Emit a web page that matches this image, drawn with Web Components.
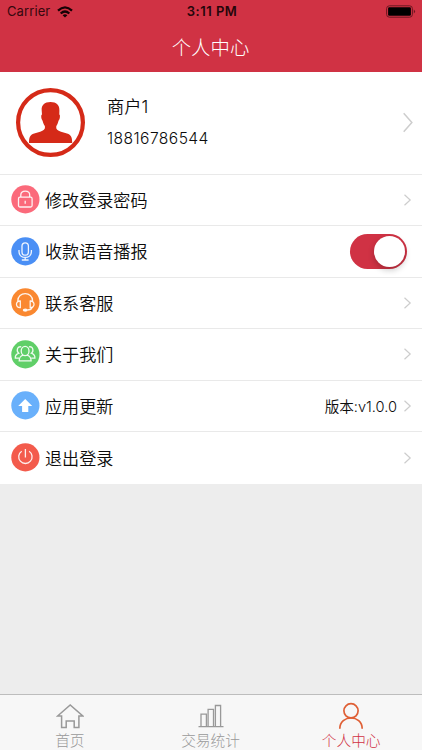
<!DOCTYPE html>
<html lang="zh-CN">
<head>
<meta charset="utf-8">
<title>个人中心</title>
<style>
    html, body {
        margin: 0;
        height: 100%;
        overflow: hidden;
    }
    body {
        font-family: Inter, "Noto Sans CJK SC", sans-serif;
        font-weight: 350;
        color: #0c0c0c;
    }
</style>
</head>
<body>
<profile-page></profile-page>

<script>
// Shared base: clones a template string into an open shadow root
class BaseElement extends HTMLElement {
    constructor() {
        super();
        this.attachShadow({ mode: 'open' });
        const template = document.createElement('template');
        template.innerHTML = this.render();
        this.shadowRoot.appendChild(template.content.cloneNode(true));
    }
}

class StatusBar extends BaseElement {
    render() {
        return `
            <style>
                :host {
                    display: grid;
                    grid-template-columns: 1fr auto 1fr;
                    align-items: center;
                    height: 23px;
                    padding: 0 6px 0 7px;
                    color: #35080e;
                    font-size: 13px;
                    line-height: 23px;
                    box-sizing: border-box;
                }
                .left { display: flex; align-items: center; gap: 7px; letter-spacing: 0.1px; font-weight: 400; }
                .time { font-weight: 600; font-size: 13px; letter-spacing: 0.5px; padding-left: 1px; color: #25060a; }
                .right { display: flex; justify-content: flex-end; }
                svg { display: block; }
            </style>
            <div class="left">
                <span>Carrier</span>
                <svg width="16" height="12" viewBox="0 0 16 12" fill="none" stroke="#160205" stroke-width="2.3">
                    <path d="M1 4.6 Q8 -1.8 15 4.6"/>
                    <path d="M3.7 7.5 Q8 3.5 12.3 7.5"/>
                    <path d="M8 11.6 L5.6 9.3 Q8 7.4 10.4 9.3 Z" fill="#160205" stroke="none"/>
                </svg>
            </div>
            <span class="time">3:11 PM</span>
            <div class="right">
                <svg width="30" height="13" viewBox="0 0 30 13">
                    <rect x="0.6" y="0.8" width="25.8" height="11.4" rx="2.8" fill="none" stroke="#6c1721" stroke-width="1"/>
                    <rect x="2.1" y="2.3" width="22.8" height="8.4" rx="1.2" fill="#000"/>
                    <path d="M27.8 4.6 Q30.4 6.5 27.8 8.4 Z" fill="#6c1721"/>
                </svg>
            </div>
        `;
    }
}
customElements.define('status-bar', StatusBar);

class NavBar extends BaseElement {
    render() {
        return `
            <style>
                :host {
                    display: block;
                    height: 72px;
                    background: #d03244;
                }
                h1 {
                    margin: 0;
                    padding-right: 1px;
                    height: 49px;
                    line-height: 50px;
                    text-align: center;
                    font-size: 19.4px;
                    font-weight: 300;
                    color: #fff;
                }
            </style>
            <status-bar></status-bar>
            <h1><slot></slot></h1>
        `;
    }
}
customElements.define('nav-bar', NavBar);

class ChevronIcon extends BaseElement {
    render() {
        return `
            <style>
                :host { display: block; width: 7px; height: 12px; }
                svg { display: block; width: 100%; height: 100%; overflow: visible; }
                path { vector-effect: non-scaling-stroke; stroke-width: var(--chevron-stroke, 1.2); }
            </style>
            <svg viewBox="0 0 7 12" preserveAspectRatio="none" fill="none" stroke="#cdcdcd">
                <path d="M0.5 0.7 L6.2 6 L0.5 11.3"/>
            </svg>
        `;
    }
}
customElements.define('chevron-icon', ChevronIcon);

class ProfileCard extends BaseElement {
    render() {
        return `
            <style>
                :host {
                    display: flex;
                    align-items: center;
                    box-sizing: border-box;
                    height: 102.5px;
                    padding: 0 9px 0 16px;
                    background: #fff;
                    border-bottom: 1px solid #e9e9e9;
                }
                .avatar { display: block; flex: none; }
                .info { flex: 1; margin-left: 22px; }
                .name { font-size: 17.2px; line-height: 32px; }
                .phone { font-size: 15.6px; line-height: 32px; letter-spacing: 0.44px; }
                chevron-icon { width: 10px; height: 21px; --chevron-stroke: 1.5; }
            </style>
            <svg class="avatar" width="69" height="69" viewBox="0 0 69 69">
                <circle cx="34.5" cy="34.5" r="32.4" fill="none" stroke="#d52a18" stroke-width="4.2"/>
                <path fill="#d52a18" d="M34.5 14 C40.5 14 43.6 17 43.4 22.5 L43.3 26.4
                    C44.2 26.4 44.1 29.5 43.5 31 C43 32.2 42.6 32.4 42.3 33.4
                    C41.9 35.8 40.6 37 40.2 38.7 C39.9 41.2 41.6 42.4 45 43.7
                    L51 45.4 C55.3 46.9 56.2 49.5 56.2 55 L13 55
                    C13 49.5 13.8 46.9 18.2 45.4 L24.2 43.7
                    C27.6 42.4 29.2 41.2 29 38.7 C28.6 37 27.2 35.8 26.8 33.4
                    C26.5 32.4 26.1 32.2 25.7 31 C25.1 29.5 25 26.4 26 26.4
                    L25.7 22.5 C25.3 17 28.5 14 34.5 14 Z"/>
            </svg>
            <div class="info">
                <div class="name"><slot name="name"></slot></div>
                <div class="phone"><slot name="phone"></slot></div>
            </div>
            <chevron-icon></chevron-icon>
        `;
    }
}
customElements.define('profile-card', ProfileCard);

class MenuRow extends BaseElement {
    render() {
        return `
            <style>
                :host {
                    display: flex;
                    align-items: center;
                    box-sizing: border-box;
                    height: 51.5px;
                    padding: 0 11px 0 11px;
                    background: #fff;
                    border-bottom: 1px solid #e9e9e9;
                }
                :host(:last-of-type) { border-bottom: none; }
                .label { flex: 1; margin-left: 5px; padding-top: 1.6px; font-size: 17.1px; line-height: 26px; }
                .extra { font-size: 14.6px; margin-right: 7px; }
            </style>
            <slot name="icon"></slot>
            <span class="label"><slot></slot></span>
            <span class="extra"><slot name="extra"></slot></span>
            <slot name="action"><chevron-icon></chevron-icon></slot>
        `;
    }
}
customElements.define('menu-row', MenuRow);

const MENU_ICONS = {
    lock: {
        color: '#fb6a7b',
        shape: `<rect x="7.5" y="12.2" width="13.6" height="9.8" rx="1.5"/>
            <path d="M9.8 12.1 V10 C9.8 4.8 18.7 4.8 18.7 10 V12.1"/>
            <path d="M14.2 15.8 V18.8"/>`
    },
    mic: {
        color: '#4a8ff5',
        shape: `<rect x="11" y="5.8" width="6.4" height="12.4" rx="3.2"/>
            <path d="M8 13 V14.7 C8 22.4 20.4 22.4 20.4 14.7 V13 M14.2 20.6 V23 M10.8 23 H17.6"/>`
    },
    headset: {
        color: '#fa8830',
        shape: `<path d="M6.8 13.2 C6.6 3.2 21.8 3.2 21.6 13.2"/>
            <path d="M9.3 13 V19.6 C4.2 20 4.2 12.6 9.3 13 Z M19.2 13 V19.6 C24.3 20 24.3 12.6 19.2 13 Z"/>
            <path d="M21.2 19 C20.8 20.9 19 22 16.4 22"/>
            <ellipse cx="14.3" cy="22.1" rx="1.9" ry="0.9" fill="#fff"/>`
    },
    people: {
        color: '#60cf68',
        shape: `<ellipse cx="14.1" cy="11" rx="3.9" ry="4.6"/>
            <path d="M12 15.2 C9.6 16.2 8.2 17 8.2 20.9 H20.1 C20.1 17 18.6 16.2 16.2 15.2"/>
            <path d="M10.2 6.9 C6.1 5.7 5.1 11.5 7.8 13.2 C5.2 14.2 4.1 15.4 4.3 18.1 H8"/>
            <path d="M18 6.9 C22.1 5.7 23.1 11.5 20.4 13.2 C23 14.2 24.1 15.4 23.9 18.1 H20.2"/>`
    },
    update: {
        color: '#69b0fb',
        shape: `<path fill="#fff" stroke="none" d="M14.2 8 L21.2 15.1 H17.3 V21 H11.1 V15.1 H7.2 Z"/>`
    },
    power: {
        color: '#f35b4c',
        shape: `<path d="M10.7 8.2 A6.7 6.7 0 1 0 18.1 8.2 M14.4 6 V14.4"/>`
    }
};

class MenuIcon extends HTMLElement {
    constructor() {
        super();
        this.attachShadow({ mode: 'open' });
    }

    connectedCallback() {
        const icon = MENU_ICONS[this.getAttribute('type')];
        this.shadowRoot.innerHTML = `
            <style>
                :host { display: block; width: 29px; height: 29px; flex: none; }
                svg { display: block; }
            </style>
            <svg width="29" height="29" viewBox="0 0 29 29" fill="none" stroke="#fff" stroke-opacity="0.9" stroke-width="1.3">
                <circle cx="14.4" cy="14.4" r="14.1" fill="${icon.color}" stroke="none"/>
                ${icon.shape}
            </svg>
        `;
    }
}
customElements.define('menu-icon', MenuIcon);

class ToggleSwitch extends BaseElement {
    connectedCallback() {
        this.addEventListener('click', () => this.toggleAttribute('checked'));
    }

    render() {
        return `
            <style>
                :host {
                    display: flex;
                    align-items: center;
                    box-sizing: border-box;
                    width: 57px;
                    height: 35px;
                    padding: 0 2px;
                    border-radius: 18px;
                    background: #ddd;
                    margin-right: 4px;
                }
                :host([checked]) { background: #d03244; justify-content: flex-end; }
                .knob {
                    width: 31px;
                    height: 31px;
                    border-radius: 50%;
                    background: #fff;
                    box-shadow: 0 3px 6px rgba(0, 0, 0, 0.22);
                }
            </style>
            <div class="knob"></div>
        `;
    }
}
customElements.define('toggle-switch', ToggleSwitch);

class TabItem extends BaseElement {
    render() {
        return `
            <style>
                :host {
                    display: flex;
                    flex-direction: column;
                    align-items: center;
                    flex: 1;
                    padding: 7px 1px 0 0;
                    color: #999;
                }
                :host([active]) { color: #d03244; }
                ::slotted(svg) { flex: none; }
                .label { font-size: 14.7px; font-weight: 300; line-height: 22px; margin-top: 1px; white-space: nowrap; }
            </style>
            <slot name="icon"></slot>
            <span class="label"><slot></slot></span>
        `;
    }
}
customElements.define('tab-item', TabItem);

class TabBar extends BaseElement {
    render() {
        return `
            <style>
                :host {
                    display: flex;
                    box-sizing: border-box;
                    height: 56px;
                    background: #f7f7f7;
                    border-top: 1px solid #bdbdbd;
                    overflow: hidden;
                }
            </style>
            <slot></slot>
        `;
    }
}
customElements.define('tab-bar', TabBar);

class ProfilePage extends BaseElement {
    render() {
        return `
            <style>
                :host {
                    display: flex;
                    flex-direction: column;
                    height: 100vh;
                    background: #ededed;
                }
                main { flex: 1; }
            </style>
            <nav-bar>个人中心</nav-bar>
            <main>
                <profile-card>
                    <span slot="name">商户1</span>
                    <span slot="phone">18816786544</span>
                </profile-card>
                <menu-row><menu-icon slot="icon" type="lock"></menu-icon>修改登录密码</menu-row>
                <menu-row><menu-icon slot="icon" type="mic"></menu-icon>收款语音播报<toggle-switch slot="action" checked></toggle-switch></menu-row>
                <menu-row><menu-icon slot="icon" type="headset"></menu-icon>联系客服</menu-row>
                <menu-row><menu-icon slot="icon" type="people"></menu-icon>关于我们</menu-row>
                <menu-row><menu-icon slot="icon" type="update"></menu-icon>应用更新<span slot="extra">版本:v1.0.0</span></menu-row>
                <menu-row><menu-icon slot="icon" type="power"></menu-icon>退出登录</menu-row>
            </main>
            <tab-bar>
                <tab-item>
                    <svg slot="icon" width="28" height="27" viewBox="0 0 28 27" fill="none" stroke="#999" stroke-width="1.5">
                        <path d="M1.6 14 L14.2 3 L26.8 14 H22.9 V25.4 H18.2 V19 H10.2 V25.4 H5.6 V14 Z"/>
                    </svg>
                    首页
                </tab-item>
                <tab-item>
                    <svg slot="icon" width="28" height="27" viewBox="0 0 28 27" fill="none" stroke="#999" stroke-width="1.3">
                        <path d="M1.5 24.6 H26.5 M4 24.6 V12.2 H9.4 V24.6 M11.1 24.6 V7.4 H16.5 V24.6 M18.4 24.6 V3.5 H23.6 V24.6"/>
                    </svg>
                    交易统计
                </tab-item>
                <tab-item active>
                    <svg slot="icon" width="28" height="27" viewBox="0 0 28 27" fill="none" stroke="#df5f35" stroke-width="1.7">
                        <circle cx="14" cy="8.8" r="7.1"/>
                        <path d="M2.8 26.8 C2.8 12.4 25.2 12.4 25.2 26.8"/>
                    </svg>
                    个人中心
                </tab-item>
            </tab-bar>
        `;
    }
}
customElements.define('profile-page', ProfilePage);
</script>
</body>
</html>
